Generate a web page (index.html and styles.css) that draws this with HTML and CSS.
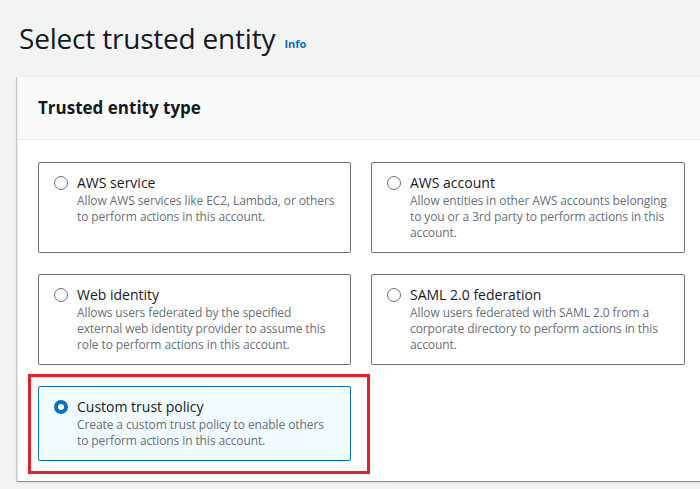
FILE: index.html
```html
<!DOCTYPE html>
<html>
<head>
<meta charset="utf-8">
<link rel="stylesheet" href="styles.css">
</head>
<body>
<div class="page">
  <h1 class="title">Select trusted entity <a class="info">Info</a></h1>
  <div class="card">
    <div class="card-header"><h2>Trusted entity type</h2></div>
    <div class="card-body">
      <div class="tiles">
        <label class="tile">
          <span class="radio"></span>
          <span class="tile-text">
            <span class="tile-title">AWS service</span>
            <span class="tile-desc">Allow AWS services like EC2, Lambda, or others<br>to perform actions in this account.</span>
          </span>
        </label>
        <label class="tile">
          <span class="radio"></span>
          <span class="tile-text">
            <span class="tile-title">AWS account</span>
            <span class="tile-desc">Allow entities in other AWS accounts belonging<br>to you or a 3rd party to perform actions in this<br>account.</span>
          </span>
        </label>
        <label class="tile">
          <span class="radio"></span>
          <span class="tile-text">
            <span class="tile-title">Web identity</span>
            <span class="tile-desc">Allows users federated by the specified<br>external web identity provider to assume this<br>role to perform actions in this account.</span>
          </span>
        </label>
        <label class="tile">
          <span class="radio"></span>
          <span class="tile-text">
            <span class="tile-title">SAML 2.0 federation</span>
            <span class="tile-desc">Allow users federated with SAML 2.0 from a<br>corporate directory to perform actions in this<br>account.</span>
          </span>
        </label>
        <div class="tile-wrap">
          <label class="tile selected">
            <span class="radio checked"></span>
            <span class="tile-text">
              <span class="tile-title">Custom trust policy</span>
              <span class="tile-desc">Create a custom trust policy to enable others<br>to perform actions in this account.</span>
            </span>
          </label>
          <div class="highlight"></div>
        </div>
      </div>
    </div>
  </div>
</div>
</body>
</html>
```

FILE: styles.css
```css
html, body {
  margin: 0;
  padding: 0;
  background: #f2f3f3;
  overflow: hidden;
  width: 700px;
  height: 489px;
}
body {
  font-family: "Open Sans", "Noto Sans", sans-serif;
  color: #16191f;
}
.page {
  padding: 17px 0 0 17px;
}
.title {
  margin: 0 0 0 2px;
  font-size: 28px;
  font-weight: 400;
  line-height: 42px;
  height: 42px;
  letter-spacing: -0.2px;
  color: #16191f;
}
.info {
  font-size: 11px;
  font-weight: 700;
  color: #0073bb;
  margin-left: 2px;
  letter-spacing: 0;
  vertical-align: 1px;
}
.card {
  margin-top: 17px;
  width: 720px;
  background: #fff;
  border-top: 1px solid #eaeded;
  border-left: 1px solid #eaeded;
  box-shadow: 0 1px 1px 0 rgba(0, 28, 36, 0.3), -1px 1px 1px 0 rgba(0, 28, 36, 0.15);
}
.card-header {
  background: #fafafa;
  border-bottom: 1px solid #eaeded;
  padding: 19px 20px 20px 20px;
}
.card-header h2 {
  margin: 0;
  font-size: 17px;
  font-weight: 700;
  line-height: 23px;
}
.card-body {
  padding: 22px 20px 20px 20px;
}
.tiles {
  display: grid;
  grid-template-columns: 313px 314px;
  gap: 21px 20px;
}
.tile {
  display: flex;
  align-items: flex-start;
  gap: 9px;
  border: 1px solid #687078;
  border-radius: 2px;
  padding: 10px 4px 11px 15px;
  background: #fff;
}
.tile.selected {
  border-color: #0073bb;
  background: #f1faff;
}
.radio {
  flex: none;
  width: 14px;
  height: 14px;
  box-sizing: border-box;
  border: 1.5px solid #687078;
  border-radius: 50%;
  margin-top: 3px;
  background: #fff;
}
.radio.checked {
  border: 4px solid #0073bb;
  background: #fff;
}
.tile-text {
  display: flex;
  flex-direction: column;
}
.tile-title {
  font-size: 14px;
  line-height: 20px;
  color: #16191f;
}
.tile-desc {
  font-size: 12px;
  line-height: 16px;
  letter-spacing: -0.1px;
  white-space: nowrap;
  color: #687078;
}
.tile-wrap {
  position: relative;
}
.highlight {
  position: absolute;
  left: -10px;
  top: -12px;
  width: 342px;
  height: 100px;
  box-sizing: border-box;
  border: 3px solid #e8202e;
  pointer-events: none;
}
```
